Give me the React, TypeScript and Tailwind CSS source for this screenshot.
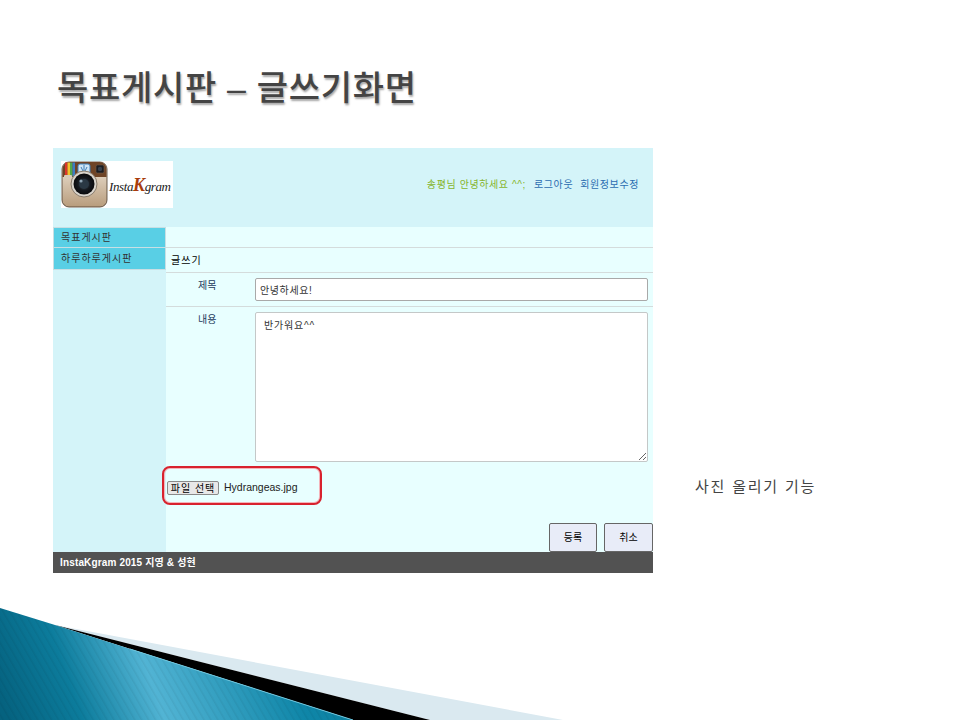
const KR = "font-['Liberation_Sans','Noto_Sans_CJK_KR',sans-serif]"

function Logo() {
  return (
    <div className="flex h-[47px] w-[112px] items-center bg-white">
      <svg width="47" height="47" viewBox="0 0 47 47" className="shrink-0">
        <defs>
          <linearGradient id="body" x1="0" y1="0" x2="0" y2="1">
            <stop offset="0" stopColor="#efe6d8" />
            <stop offset="1" stopColor="#b89c7c" />
          </linearGradient>
          <radialGradient id="lens">
            <stop offset="0" stopColor="#44505c" />
            <stop offset="0.6" stopColor="#14181e" />
            <stop offset="1" stopColor="#0a0a0c" />
          </radialGradient>
        </defs>
        <rect x="1" y="1" width="45" height="45" rx="7" fill="url(#body)" stroke="#4a3a2c" strokeWidth="0.8" />
        <path d="M1.5 16V8a7 7 0 0 1 7-7h30a7 7 0 0 1 7 7v8H32a11 11 0 0 0-18 0H1.5z" fill="#6f4426" />
        <rect x="4" y="1.5" width="2.5" height="14" fill="#d9362c" />
        <rect x="6.5" y="1.5" width="2.5" height="14" fill="#f0c22e" />
        <rect x="9" y="1.5" width="2.5" height="14" fill="#52a84a" />
        <rect x="11.5" y="1.5" width="2.5" height="14" fill="#3c7cc4" />
        <rect x="17" y="3" width="12" height="10" rx="2" fill="#cfe4f4" stroke="#3f7fb8" strokeWidth="1" />
        <path d="M23 4v7M20 6l2 4M26 6l-2 4" stroke="#3f7fb8" strokeWidth="1" />
        <rect x="35" y="4" width="8" height="8" rx="1.5" fill="#1c1c20" stroke="#6b5a4a" strokeWidth="0.6" />
        <circle cx="39" cy="8" r="2.2" fill="#38424e" />
        <rect x="3" y="14" width="8" height="3" rx="1" fill="#d8ccb8" />
        <circle cx="23" cy="23" r="13" fill="#d9d4cc" stroke="#8a7c6c" strokeWidth="1" />
        <circle cx="23" cy="23" r="10.5" fill="url(#lens)" />
        <circle cx="23" cy="23" r="5" fill="#2a3844" />
        <circle cx="20" cy="20" r="1.6" fill="#8fa4b4" />
      </svg>
      <span className="ml-[1px] font-['Liberation_Serif',serif] text-[13px] leading-none tracking-[-0.4px] text-[#222] italic">
        Insta<span className="text-[18px] font-bold text-[#a83c0c]">K</span>gram
      </span>
    </div>
  )
}

function Sidebar() {
  return (
    <div className="flex w-[113px] shrink-0 flex-col bg-[#d4f4f9] text-[10px] tracking-[1px] text-[#333]">
      <div className="flex h-[21px] items-center border border-[#c8dfe4] bg-[#59cfe5] pl-[7px]">목표게시판</div>
      <div className="flex h-[22px] items-center border border-t-0 border-[#c8dfe4] bg-[#59cfe5] pl-[7px]">하루하루게시판</div>
    </div>
  )
}

function Form() {
  return (
    <div className="flex min-w-0 flex-1 flex-col bg-[#e8ffff] text-[10px] text-[#333]">
      <div className="h-[21px] border-b border-[#d4dcdc]" />
      <div className="flex h-[25px] items-center border-b border-[#d4dcdc] pl-[5px] tracking-[1px] text-black">글쓰기</div>
      <div className="flex h-[34px] border-b border-[#d4dcdc] pt-[5px]">
        <span className="w-[89px] pl-[32px] text-[#1c3a5c]">제목</span>
        <input
          readOnly
          value="안녕하세요!"
          className="h-[23px] w-[393px] rounded-[2px] border border-[#a9a9a9] bg-white px-[4px] text-[10px] tracking-[0.6px] text-[#333] outline-none"
        />
      </div>
      <div className="flex h-[159px] pt-[5px]">
        <span className="w-[89px] pl-[32px] text-[#1c3a5c]">내용</span>
        <textarea
          readOnly
          value="반가워요^^"
          className="h-[150px] w-[393px] rounded-[2px] border border-[#c4c8c8] bg-white px-[8px] py-[5px] text-[10px] tracking-[0.8px] text-[#333] outline-none"
        />
      </div>
      <div className="-ml-[4px] flex h-[39px] w-[160px] items-center rounded-[8px] border-2 border-[#d8222e] pt-[5px] pl-[3px] shadow-[inset_0_0_0_1px_#f4b4ba]">
        <span className="flex h-[14px] w-[52px] items-center justify-center rounded-[2px] border border-[#8a8a8a] bg-[#e8e8e8] text-[10px] tracking-[1px] text-black">
          파일 선택
        </span>
        <span className="ml-[5px] text-[10.5px] text-[#222]">Hydrangeas.jpg</span>
      </div>
      <div className="mt-[18px] flex justify-end gap-[7px]">
        <button className="h-[29px] w-[48px] rounded-[2px] border border-[#666] bg-[#e8ecf8] text-[10px] text-black">등록</button>
        <button className="h-[29px] w-[49px] rounded-[2px] border border-[#666] bg-[#e8ecf8] text-[10px] text-black">취소</button>
      </div>
    </div>
  )
}

function Swoosh() {
  return (
    <svg width="960" height="112" viewBox="0 0 960 112" className="block">
      <defs>
        <linearGradient id="sea" gradientUnits="userSpaceOnUse" x1="0" y1="90" x2="330" y2="-30">
          <stop offset="0" stopColor="#05627f" />
          <stop offset="0.2" stopColor="#0c7c9c" />
          <stop offset="0.42" stopColor="#52b4d4" />
          <stop offset="0.8" stopColor="#0f86a8" />
          <stop offset="1" stopColor="#0b7f9e" />
        </linearGradient>
        <pattern id="stripes" width="6" height="6" patternUnits="userSpaceOnUse" patternTransform="rotate(-30)">
          <rect width="1.5" height="6" fill="#000" opacity="0.05" />
        </pattern>
      </defs>
      <path d="M55 17L563 112H430z" fill="#dae9f0" />
      <path d="M55 17L430 112H353z" fill="#000" />
      <path d="M0 0L55 17L353 112H0z" fill="url(#sea)" />
      <path d="M0 0L55 17L353 112H0z" fill="url(#stripes)" />
      <path d="M130 41L353 112" stroke="#6cc4dc" strokeWidth="1" />
    </svg>
  )
}

export default function App() {
  return (
    <div className={`flex h-[720px] w-[960px] flex-col overflow-hidden bg-white ${KR}`}>
      <h1 className="mt-[65px] ml-[57px] h-[83px] text-[34px] leading-[46px] font-medium tracking-[0.7px] text-[#444] [text-shadow:1px_2px_2px_rgba(0,0,0,0.35)]">
        목표게시판 – 글쓰기화면
      </h1>
      <div className="ml-[53px] flex items-start">
        <div className="flex h-[425px] w-[600px] flex-col">
          <div className="flex h-[79px] items-start justify-between bg-[#d4f4f9] pt-[13px] pr-[14px] pl-[8px] text-[10px] tracking-[0.6px]">
            <Logo />
            <div className="pt-[16px]">
              <span className="text-[#86b42c]">송평님 안녕하세요 ^^;</span>
              <span className="ml-[8px] text-[#2b6cb0]">로그아웃</span>
              <span className="ml-[7px] text-[#2b6cb0]">회원정보수정</span>
            </div>
          </div>
          <div className="flex min-h-0 flex-1">
            <Sidebar />
            <Form />
          </div>
          <div className="flex h-[21px] shrink-0 items-center bg-[#525252] pb-[1px] pl-[7px] text-[10px] font-bold tracking-[0.15px] text-white">
            InstaKgram 2015 지영 &amp; 성현
          </div>
        </div>
        <span className="mt-[328px] ml-[42px] text-[15px] leading-[22px] tracking-[1.8px] text-[#444]">사진 올리기 기능</span>
      </div>
      <div className="mt-[35px]">
        <Swoosh />
      </div>
    </div>
  )
}
